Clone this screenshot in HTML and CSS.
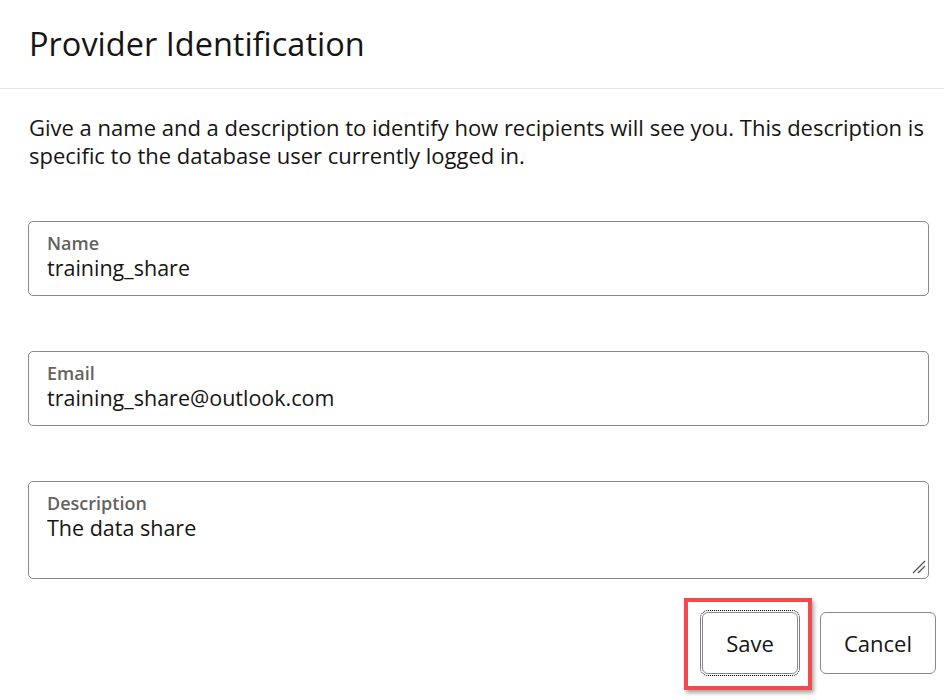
FILE: index.html
```html
<!DOCTYPE html>
<html lang="en">
<head>
<meta charset="utf-8">
<title>Provider Identification</title>
<link rel="stylesheet" href="styles.css">
</head>
<body>
<header class="header">
  <h1 class="title">Provider Identification</h1>
</header>
<main class="content">
  <p class="intro">Give a name and a description to identify how recipients will see you. This description is specific to the database user currently logged in.</p>
  <form class="form">
    <label class="field">
      <span class="field-label">Name</span>
      <input class="field-input" type="text" value="training_share">
    </label>
    <label class="field">
      <span class="field-label">Email</span>
      <input class="field-input" type="text" value="training_share@outlook.com">
    </label>
    <label class="field field-area">
      <span class="field-label">Description</span>
      <textarea class="field-input field-textarea" rows="2">The data share</textarea>
      <svg class="grip" width="14" height="14" viewBox="0 0 14 14" aria-hidden="true">
        <path d="M1 13 L13 1 M6 13 L13 6" stroke="#555" stroke-width="1.3" fill="none"/>
      </svg>
    </label>
    <div class="actions">
      <div class="save-wrap">
        <button type="button" class="btn btn-focus">Save</button>
        <span class="highlight" aria-hidden="true"></span>
      </div>
      <button type="button" class="btn">Cancel</button>
    </div>
  </form>
</main>
</body>
</html>
```
FILE: styles.css
```css
html, body {
  margin: 0;
  padding: 0;
  background: #ffffff;
}
body {
  font-family: "Open Sans", "Noto Sans", "Liberation Sans", sans-serif;
  color: #161513;
  min-height: 700px;
}
.header {
  padding: 24px 29px;
  border-bottom: 1px solid #e4e4e4;
}
.title {
  margin: 0;
  font-size: 32.5px;
  font-weight: 400;
  line-height: 40px;
  color: #161513;
}
.content {
  padding: 0 15px 27px 28px;
}
.intro {
  margin: 24px 0 0 1px;
  font-size: 22px;
  line-height: 28px;
}
.form {
  display: flex;
  flex-direction: column;
  gap: 55px;
  margin-top: 52px;
}
.field {
  position: relative;
  display: flex;
  flex-direction: column;
  height: 75px;
  box-sizing: border-box;
  padding: 11px 18px 0 18px;
  border: 1px solid #8a8a8a;
  border-radius: 5px;
}
.field-area {
  height: 98px;
}
.field-label {
  font-size: 18px;
  font-weight: 600;
  line-height: 20px;
  color: #65625f;
}
.field-input {
  margin: 1px 0 0 0;
  padding: 0;
  border: none;
  outline: none;
  background: transparent;
  font-family: inherit;
  font-size: 21.5px;
  line-height: 28px;
  height: 28px;
  color: #161513;
}
.field-textarea {
  height: 56px;
  resize: none;
  overflow: hidden;
}
.grip {
  position: absolute;
  right: 2px;
  bottom: 4px;
}
.actions {
  display: flex;
  justify-content: flex-end;
  gap: 22px;
  margin: -22px -7px 0 0;
}
.save-wrap {
  position: relative;
  display: flex;
}
.btn {
  height: 62px;
  padding: 0 23px;
  border: 1px solid #8a8a8a;
  border-radius: 6px;
  background: #ffffff;
  font-family: inherit;
  font-size: 22px;
  color: #161513;
  cursor: pointer;
}
.btn-focus {
  width: 96px;
  outline: 1px dotted #000000;
  outline-offset: 1px;
}
.highlight {
  position: absolute;
  left: -18px;
  top: -14px;
  width: 120px;
  height: 84px;
  border: 4px solid #f24a4a;
  box-shadow: 2px 3px 4px rgba(0, 0, 0, 0.35);
  pointer-events: none;
}
```
